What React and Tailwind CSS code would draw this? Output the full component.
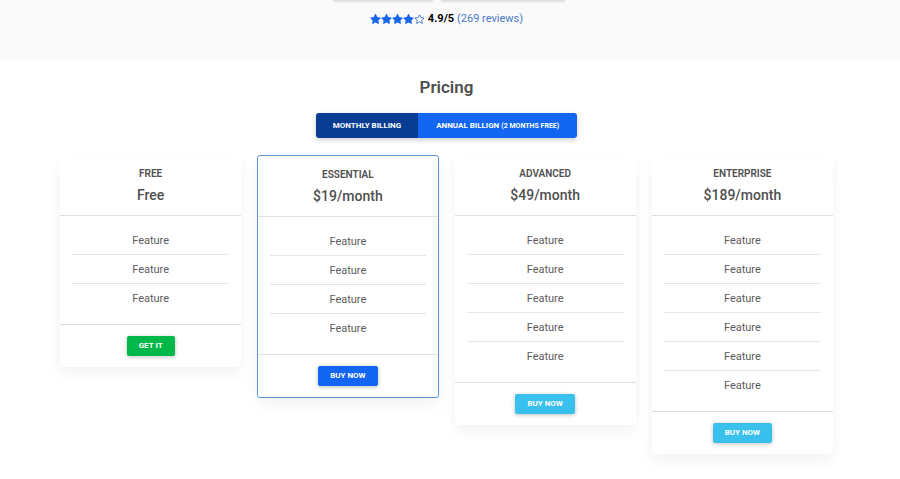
const plans = [
  { name: 'Free', price: 'Free', features: 3, cta: 'Get it', button: 'bg-[#00b74a]', card: '' },
  { name: 'Essential', price: '$19/month', features: 4, cta: 'Buy now', button: 'bg-[#1266f1]', card: 'border border-[#5a92cf]' },
  { name: 'Advanced', price: '$49/month', features: 5, cta: 'Buy now', button: 'bg-[#39c0ed]', card: '' },
  { name: 'Enterprise', price: '$189/month', features: 6, cta: 'Buy now', button: 'bg-[#39c0ed]', card: '' },
];

const STAR =
  'M259.3 17.8L194 150.2 47.9 171.5c-26.2 3.8-36.7 36.1-17.7 54.6l105.7 103-25 145.5c-4.5 26.3 23.2 46 46.4 33.7L288 439.6l130.7 68.7c23.2 12.2 50.9-7.4 46.4-33.7l-25-145.5 105.7-103c19-18.5 8.5-50.8-17.7-54.6L382 150.2 316.7 17.8c-11.7-23.6-45.6-23.9-57.4 0z';

function Star({ outline }) {
  return (
    <svg viewBox="0 0 576 512" className="h-[10px] w-[11px]" fill="#1a66e8" aria-hidden="true">
      {outline ? (
        <path
          d="M288 36L360 180 527 204 408 321 436 486 288 408 140 486 168 321 49 204 216 180z"
          fill="none"
          stroke="#3f74d8"
          strokeWidth="48"
          strokeLinejoin="round"
        />
      ) : (
        <path d={STAR} />
      )}
    </svg>
  );
}

function PlanCard({ plan }) {
  return (
    <article
      className={`rounded-[3px] bg-white text-center shadow-[0_8px_16px_rgba(0,0,0,0.04),0_2px_10px_rgba(0,0,0,0.02)] ${plan.card}`}
    >
      <header className="border-b border-[#e0e0e0] pt-[10px] pb-[10px]">
        <h3 className="text-[10px] leading-[18px] font-semibold text-[#4f4f4f] uppercase">{plan.name}</h3>
        <p className="mt-[2px] text-[14px] leading-5 font-medium text-[#4f4f4f]">{plan.price}</p>
      </header>
      <ul className="px-3 pt-[10px] pb-[11px]">
        {Array.from({ length: plan.features }, (_, i) => (
          <li
            key={i}
            className="h-[29px] border-b border-[#e6e6e6] text-[11px] leading-[29px] text-[#5c5c5c] last:border-transparent"
          >
            Feature
          </li>
        ))}
      </ul>
      <footer className="flex justify-center border-t border-[#e0e0e0] py-[11px]">
        <button
          type="button"
          className={`h-5 rounded-[2px] px-3 text-[8px] leading-5 font-bold text-white uppercase shadow-[0_1px_4px_rgba(0,0,0,0.25)] ${plan.button}`}
        >
          {plan.cta}
        </button>
      </footer>
    </article>
  );
}

export default function App() {
  return (
    <div className="bg-white font-['Roboto',sans-serif]">
      <section className="h-[60px] overflow-hidden bg-[#fafafa] pr-[7px]">
        <div className="flex h-[2px] justify-center gap-2 pl-[5px]">
          <div className="h-px w-[100px] bg-[#dcdcdc] shadow-[0_1px_2px_rgba(0,0,0,0.15)]" />
          <div className="h-px w-[124px] bg-[#dcdcdc] shadow-[0_1px_2px_rgba(0,0,0,0.15)]" />
        </div>
        <div className="mt-[9px] flex items-center justify-center gap-[3px] text-[11px] leading-4">
          <span className="flex" role="img" aria-label="4.9 out of 5 stars">
            <Star />
            <Star />
            <Star />
            <Star />
            <Star outline />
          </span>
          <strong className="font-bold text-black">4.9/5</strong>
          <a href="#reviews" className="text-[#4a78c8]">
            (269 reviews)
          </a>
        </div>
      </section>

      <section className="pt-[15px] pr-[7px] pb-6">
        <h2 className="text-center text-[17px] leading-6 font-semibold text-[#4f4f4f]">Pricing</h2>
        <div className="mt-[14px] flex justify-center">
          <div className="flex overflow-hidden rounded-[3px] text-[8px] leading-[25px] font-bold text-white uppercase shadow-[0_2px_5px_rgba(0,0,0,0.2)]">
            <button type="button" className="h-[25px] bg-[#093d94] px-[17px] uppercase">
              Monthly billing
            </button>
            <button type="button" className="h-[25px] bg-[#1266f1] px-[18px] uppercase">
              Annual billign <span className="text-[7px]">(2 months free)</span>
            </button>
          </div>
        </div>
        <div className="mx-auto mt-[17px] grid max-w-[1100px] grid-cols-4 items-start gap-4 px-[60px]">
          {plans.map((plan) => (
            <PlanCard key={plan.name} plan={plan} />
          ))}
        </div>
      </section>
    </div>
  );
}
